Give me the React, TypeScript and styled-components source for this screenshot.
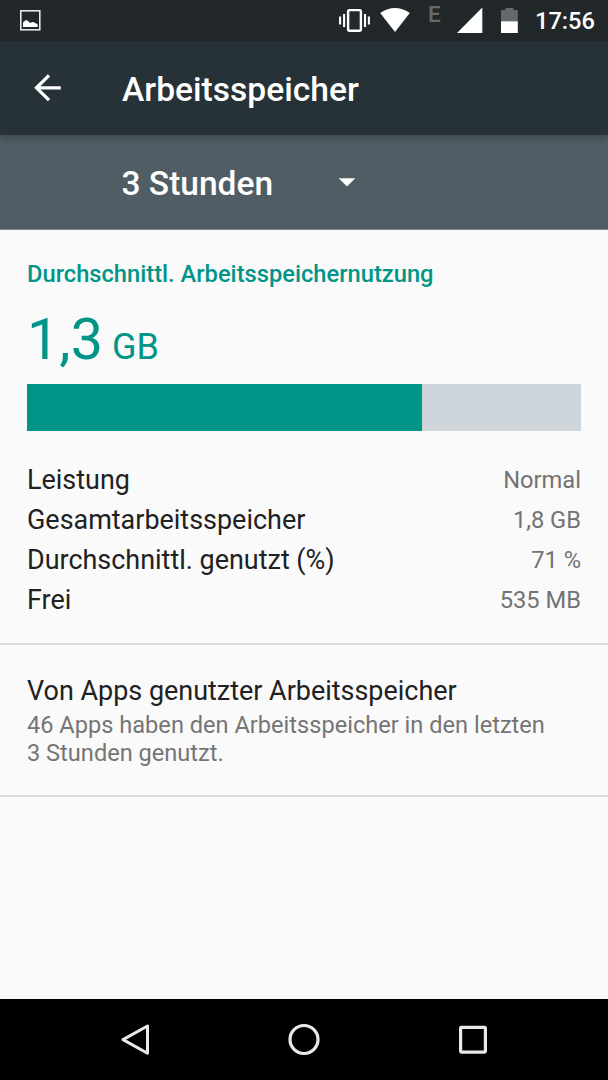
import React from "react";
import styled, { createGlobalStyle } from "styled-components";

const GlobalStyle = createGlobalStyle`
  * { box-sizing: border-box; }
  body { margin: 0; background: #fafafa; font-family: Roboto, "Noto Sans", sans-serif; }
  svg { display: block; flex: none; }
`;

const Screen = styled.div`
  display: flex;
  flex-direction: column;
  width: 608px;
  height: 1080px;
  overflow: hidden;
  background: #fafafa;
`;

const StatusBar = styled.header`
  display: flex;
  justify-content: space-between;
  align-items: flex-start;
  flex: none;
  height: 41px;
  padding: 0 14px 0 20px;
  background: #22272a;
  color: #fff;
`;

const StatusIcons = styled.div`
  display: flex;
  align-items: flex-start;
`;

const WifiSlot = styled.span`
  margin-left: 9px;
`;

const BatterySlot = styled.span`
  margin-left: 18px;
`;

const NetworkType = styled.span`
  width: 14px;
  margin: 3px 15px 0 17px;
  color: #65696b;
  font-size: 22.5px;
  font-weight: 500;
  line-height: 22px;
`;

const Clock = styled.time`
  width: 59px;
  margin-left: 17px;
  font-size: 23.64px;
  font-weight: 500;
  line-height: 42px;
  white-space: nowrap;
`;

const Toolbar = styled.div`
  position: relative;
  display: flex;
  align-items: center;
  flex: none;
  height: 94px;
  padding-left: 32px;
  background: #263238;
  box-shadow: 0 2px 7px rgba(40, 40, 40, 0.5);
`;

const Title = styled.h1`
  margin: 4px 0 0 60px;
  color: #fff;
  font-size: 33.6px;
  font-weight: 500;
  line-height: 40px;
`;

const PeriodPicker = styled.div`
  display: flex;
  align-items: center;
  flex: none;
  height: 95px;
  padding-left: 121.5px;
  border-bottom: 1px solid #7d878b;
  background: #505d64;
`;

const Period = styled.span`
  width: 216.5px;
  margin-top: 3px;
  color: #fff;
  font-size: 33.5px;
  font-weight: 500;
  line-height: 40px;
`;

const Section = styled.section`
  flex: none;
  border-bottom: 2px solid #dcdede;
`;

const UsageSection = styled(Section)`
  height: 415px;
  padding: 29px 27px 0;
`;

const AppsSection = styled(Section)`
  height: 152px;
  padding: 30px 27px 0;
`;

const Heading = styled.h2`
  margin: 0;
  color: #009587;
  font-size: 23.7px;
  font-weight: 500;
  line-height: 30px;
`;

const Amount = styled.div`
  height: 95px;
  padding-top: 17px;
  color: #009587;
  font-size: 57.5px;
  line-height: 67px;
  white-space: pre;
`;

const Unit = styled.span`
  font-size: 36px;
`;

const Track = styled.div`
  height: 47px;
  margin-bottom: 28px;
  background: #cfd6db;
`;

const Fill = styled.div<{ $percent: number }>`
  width: ${(p) => p.$percent}%;
  height: 100%;
  background: #009587;
`;

const Row = styled.div`
  display: flex;
  justify-content: space-between;
  height: 40px;
`;

const Label = styled.span`
  color: #212121;
  font-size: 26.95px;
  line-height: 42px;
`;

const Value = styled.span`
  color: #737373;
  font-size: 23.7px;
  line-height: 42px;
`;

const AppsTitle = styled.div`
  color: #212121;
  font-size: 26.95px;
  line-height: 32px;
`;

const AppsSummary = styled.p`
  margin: 5px 0 0;
  color: #757575;
  font-size: 23.6px;
  line-height: 27.8px;
`;

const NavBar = styled.nav`
  display: flex;
  justify-content: center;
  align-items: center;
  gap: 129px;
  flex: none;
  height: 81px;
  margin-top: auto;
  background: #000;
`;

const stats = [
  { label: "Leistung", value: "Normal" },
  { label: "Gesamtarbeitsspeicher", value: "1,8 GB" },
  { label: "Durchschnittl. genutzt (%)", value: "71 %" },
  { label: "Frei", value: "535 MB" },
];

const PictureIcon = () => (
  <svg width="21" height="41" viewBox="0 0 21 41">
    <rect x="0.8" y="10.8" width="19" height="19" fill="none" stroke="#f2f2f2" strokeWidth="1.5" />
    <path d="M3 27v-4.6q3.6-4 5.4-.8l1.8 1.4q3-2 4.8 0l2.6.9V27z" fill="#fff" />
  </svg>
);

const VibrateIcon = () => (
  <svg width="32" height="41" viewBox="0 0 32 41">
    <rect x="9.1" y="10.1" width="12.8" height="20.6" rx="1.4" fill="none" stroke="#fff" strokeWidth="2.4" />
    <path d="M1.1 16.5v8M5.1 14v13M26 14v13M29.9 16.5v8" stroke="#fff" strokeWidth="2.1" />
  </svg>
);

const WifiIcon = () => (
  <svg width="31" height="41" viewBox="0 0 31 41">
    <path d="M.2 13Q15 3 29.8 13L15 32z" fill="#fff" />
  </svg>
);

const SignalIcon = () => (
  <svg width="26" height="41" viewBox="0 0 26 41">
    <path d="M0 33 25.3 7.5V33z" fill="#fff" />
  </svg>
);

const BatteryIcon = () => (
  <svg width="17" height="41" viewBox="0 0 17 41">
    <path d="M0 10h4.5V8h8v2h4.3v11.5H0z" fill="#65696b" />
    <path d="M0 21.3h16.8V33H0z" fill="#fff" />
  </svg>
);

export default function App() {
  return (
    <Screen>
      <GlobalStyle />
      <StatusBar>
        <PictureIcon />
        <StatusIcons>
          <VibrateIcon />
          <WifiSlot>
            <WifiIcon />
          </WifiSlot>
          <NetworkType>E</NetworkType>
          <SignalIcon />
          <BatterySlot>
            <BatteryIcon />
          </BatterySlot>
          <Clock>17:56</Clock>
        </StatusIcons>
      </StatusBar>
      <Toolbar>
        <svg width="30" height="30" viewBox="0 0 30 30">
          <path d="M28.8 14.8H4.5M17 2.4 4.5 14.8 17 27.2" fill="none" stroke="#fff" strokeWidth="3.3" />
        </svg>
        <Title>Arbeitsspeicher</Title>
      </Toolbar>
      <PeriodPicker>
        <Period>3 Stunden</Period>
        <svg width="18" height="10" viewBox="0 0 18 10">
          <path d="M.7 1.2h16.6L9 9.5z" fill="#fff" />
        </svg>
      </PeriodPicker>
      <UsageSection>
        <Heading>Durchschnittl. Arbeitsspeichernutzung</Heading>
        <Amount>
          1,3<Unit> GB</Unit>
        </Amount>
        <Track>
          <Fill $percent={71.25} />
        </Track>
        {stats.map((s) => (
          <Row key={s.label}>
            <Label>{s.label}</Label>
            <Value>{s.value}</Value>
          </Row>
        ))}
      </UsageSection>
      <AppsSection>
        <AppsTitle>Von Apps genutzter Arbeitsspeicher</AppsTitle>
        <AppsSummary>
          46 Apps haben den Arbeitsspeicher in den letzten
          <br />3 Stunden genutzt.
        </AppsSummary>
      </AppsSection>
      <NavBar>
        <svg width="40" height="40" viewBox="0 0 40 40">
          <path d="M32.5 6v27.2L8 19.6z" fill="none" stroke="#e9e9e9" strokeWidth="3" strokeLinejoin="round" />
        </svg>
        <svg width="40" height="40" viewBox="0 0 40 40">
          <circle cx="20" cy="19.5" r="14" fill="none" stroke="#e9e9e9" strokeWidth="3.2" />
        </svg>
        <svg width="40" height="40" viewBox="0 0 40 40">
          <rect x="7.6" y="7.3" width="24.8" height="24.8" rx="0.8" fill="none" stroke="#e9e9e9" strokeWidth="3.2" />
        </svg>
      </NavBar>
    </Screen>
  );
}
